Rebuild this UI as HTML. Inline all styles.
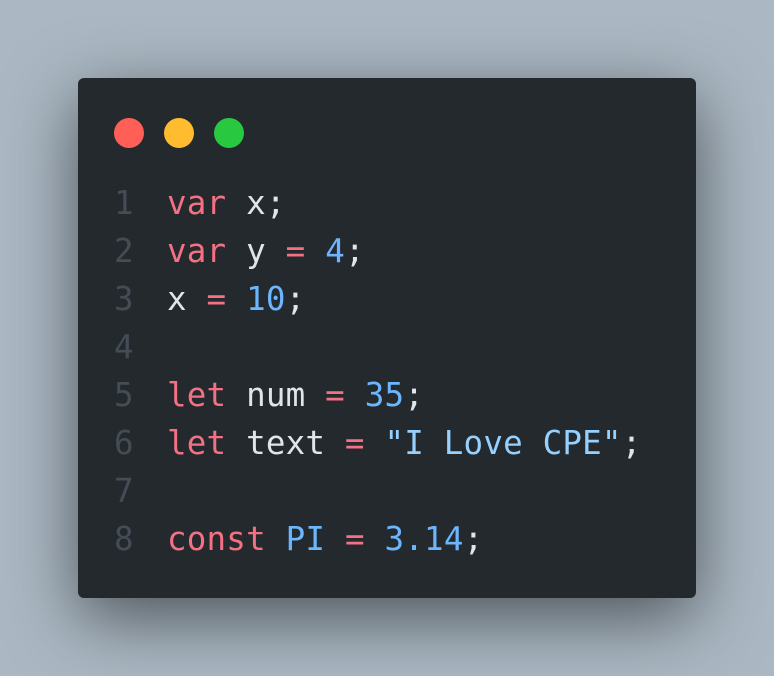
<!DOCTYPE html>
<html><head><meta charset="utf-8"><style>
html,body{margin:0;padding:0}
body{width:774px;height:676px;background:#abb8c3;position:relative;overflow:hidden}
.card{position:absolute;left:78px;top:78px;width:618px;height:520px;background:#24292e;border-radius:6px;box-shadow:0 20px 70px rgba(0,0,0,0.55)}
.dot{position:absolute;top:40px;width:30px;height:30px;border-radius:50%}
pre{position:absolute;left:0;top:101px;margin:0;font-family:"DejaVu Sans Mono","Liberation Mono",monospace;font-size:32.5px;letter-spacing:0.2px;line-height:48px;color:#e1e4e8}
.ln{display:inline-block;width:89px;text-align:left;padding-left:36px;box-sizing:border-box;color:#444c56}
.k{color:#f47183}.n{color:#6cb6ff}.s{color:#96d0ff}
</style></head><body>
<div class="card">
<div class="dot" style="left:36px;background:#ff5f57"></div>
<div class="dot" style="left:86px;background:#febc2e"></div>
<div class="dot" style="left:136px;background:#28c840"></div>
<pre><span class="ln">1</span><span class="k">var</span> x;
<span class="ln">2</span><span class="k">var</span> y <span class="k">=</span> <span class="n">4</span>;
<span class="ln">3</span>x <span class="k">=</span> <span class="n">10</span>;
<span class="ln">4</span>
<span class="ln">5</span><span class="k">let</span> num <span class="k">=</span> <span class="n">35</span>;
<span class="ln">6</span><span class="k">let</span> text <span class="k">=</span> <span class="s">"I Love CPE"</span>;
<span class="ln">7</span>
<span class="ln">8</span><span class="k">const</span> <span class="n">PI</span> <span class="k">=</span> <span class="n">3.14</span>;</pre>
</div>
</body></html>
